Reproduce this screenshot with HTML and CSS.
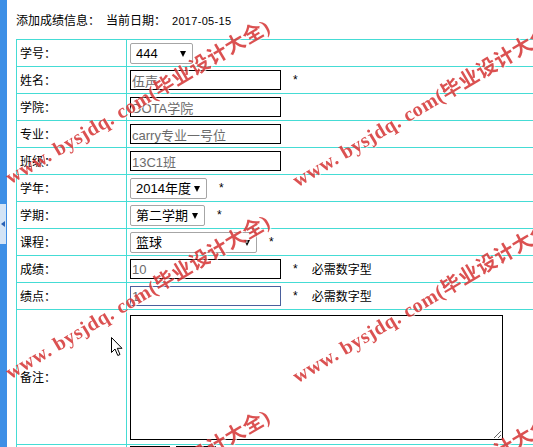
FILE: index.html
```html
<!DOCTYPE html>
<html lang="zh-CN">
<head>
  <meta charset="UTF-8">
  <title>添加成绩信息</title>
  <link rel="stylesheet" href="styles.css">
</head>
<body>

  <div class="side">
    <div class="side-tab"></div>
  </div>

  <div class="main">
    <div class="title">
      <span class="title-item">添加成绩信息：</span><span class="title-item">当前日期：</span><span class="date">2017-05-15</span>
    </div>

    <form>
      <table class="form-table">
        <tr>
          <td class="label">学号：</td>
          <td><span class="sel sel-id"><select><option>444</option></select></span></td>
        </tr>
        <tr>
          <td class="label">姓名：</td>
          <td><input class="txt" type="text" value="伍声"><span class="req">*</span></td>
        </tr>
        <tr>
          <td class="label">学院：</td>
          <td><input class="txt" type="text" value="DOTA学院"></td>
        </tr>
        <tr>
          <td class="label">专业：</td>
          <td><input class="txt" type="text" value="carry专业一号位"></td>
        </tr>
        <tr>
          <td class="label">班级：</td>
          <td><input class="txt" type="text" value="13C1班"></td>
        </tr>
        <tr>
          <td class="label">学年：</td>
          <td><span class="sel sel-year"><select><option>2014年度</option></select></span><span class="req">*</span></td>
        </tr>
        <tr>
          <td class="label">学期：</td>
          <td><span class="sel sel-term"><select><option>第二学期</option></select></span><span class="req">*</span></td>
        </tr>
        <tr>
          <td class="label">课程：</td>
          <td><span class="sel sel-course"><select><option>篮球</option></select></span><span class="req">*</span></td>
        </tr>
        <tr>
          <td class="label">成绩：</td>
          <td><input class="txt" type="text" value="10"><span class="req">*</span><span class="hint">必需数字型</span></td>
        </tr>
        <tr>
          <td class="label">绩点：</td>
          <td><input class="txt txt-focus" type="text" value="1"><span class="req">*</span><span class="hint">必需数字型</span></td>
        </tr>
        <tr class="memo-row">
          <td class="label">备注：</td>
          <td><textarea class="memo"></textarea></td>
        </tr>
        <tr class="btn-row">
          <td class="label"></td>
          <td><button class="btn" type="submit">提交</button><button class="btn" type="reset">重置</button></td>
        </tr>
      </table>
    </form>
  </div>

  <div class="wm">
    <span class="wm-1">www. bysjdq. com(毕业设计大全)</span>
    <span class="wm-2">www. bysjdq. com(毕业设计大全)</span>
    <span class="wm-3">www. bysjdq. com(毕业设计大全)</span>
    <span class="wm-4">www. bysjdq. com(毕业设计大全)</span>
    <span class="wm-5">www. bysjdq. com(毕业设计大全)</span>
    <span class="wm-6">www. bysjdq. com(毕业设计大全)</span>
  </div>

  <svg class="cursor" width="13" height="20" viewBox="0 0 13 20">
    <path d="M0.5 0.5 L0.5 15.5 L4 12 L6.8 18.5 L9 17.5 L6.3 11.3 L11 11.3 Z" fill="#fff" stroke="#000" stroke-width="1"/>
  </svg>

</body>
</html>
```

FILE: styles.css
```css
html, body {
  margin: 0;
  padding: 0;
  height: 100%;
  overflow: hidden;
}
body {
  display: flex;
  font: 12px/16px "Noto Sans CJK SC", "Liberation Sans", sans-serif;
  color: #000;
  background-color: #fff;
}
.side {
  flex: none;
  width: 7px;
  height: 100%;
  background-color: #3d8fe6;
  display: flex;
  align-items: center;
}
.side-tab {
  width: 6px;
  height: 40px;
  background-color: #d3e4f6;
  display: flex;
  align-items: center;
  justify-content: center;
}
.side-tab::before {
  content: "";
  border-top: 3px solid transparent;
  border-bottom: 3px solid transparent;
  border-right: 4px solid #2a62b5;
}
.main {
  flex: none;
  padding: 12px 0 0 9px;
}
.title {
  line-height: 16px;
  margin-bottom: 11px;
}
.title-item {
  margin-right: 6px;
}
.date {
  font: 11px "Liberation Sans", sans-serif;
  letter-spacing: 0.3px;
}
form {
  margin: 0;
}
.form-table {
  border-collapse: collapse;
  width: 580px;
}
.form-table td {
  border: 1px solid #45dcd5;
  height: 26px;
  padding: 0 0 0 3px;
  vertical-align: middle;
}
.form-table td.label {
  width: 106px;
}
.txt {
  box-sizing: border-box;
  width: 151px;
  height: 20px;
  margin: 0;
  padding: 0 1px;
  border: 1px solid #000;
  font: 13px "Liberation Sans", "Noto Sans CJK SC", sans-serif;
  color: #6b6b6b;
  vertical-align: middle;
  outline: none;
}
.txt-focus {
  border-color: #4a5f9c;
}
.sel {
  position: relative;
  display: inline-block;
  vertical-align: middle;
}
.sel select {
  appearance: none;
  -webkit-appearance: none;
  box-sizing: border-box;
  display: block;
  height: 21px;
  margin: 0;
  padding: 0 0 0 5px;
  border: 1px solid #a6a6a6;
  border-radius: 2px;
  background-color: #fff;
  font: 13px "Liberation Sans", "Noto Sans CJK SC", sans-serif;
  color: #000;
}
.sel::after {
  content: "";
  position: absolute;
  right: 7px;
  top: 8px;
  border-left: 3.5px solid transparent;
  border-right: 3.5px solid transparent;
  border-top: 6px solid #000;
  pointer-events: none;
}
.sel-id select { width: 63px; }
.sel-year select { width: 77px; }
.sel-term select { width: 75px; }
.sel-course select { width: 127px; }
.req {
  margin-left: 12px;
  font-family: "Liberation Sans", sans-serif;
  vertical-align: middle;
}
.hint {
  margin-left: 14px;
  vertical-align: middle;
}
.memo-row td {
  height: 134px;
}
.memo {
  display: block;
  box-sizing: border-box;
  width: 373px;
  height: 125px;
  margin: 0;
  border: 1px solid #000;
  resize: both;
}
.btn-row td {
  vertical-align: top;
  padding-top: 1px;
}
.btn {
  box-sizing: border-box;
  width: 40px;
  height: 24px;
  margin: 0 6px 0 0;
  padding: 6px 0 0;
  border: 1px solid #000;
  background-color: #f0f0f0;
  font: 12px/16px "Noto Sans CJK SC", sans-serif;
}

/* watermark layer */
.wm {
  position: fixed;
  top: 0;
  left: 0;
  right: 0;
  bottom: 0;
  overflow: hidden;
  pointer-events: none;
}
.wm span {
  position: absolute;
  font: bold 20px/20px "Liberation Serif", "Noto Sans CJK SC", serif;
  letter-spacing: 0.6px;
  color: #d63a3a;
  opacity: 0.88;
  text-shadow: 1px 1px 0 rgba(255, 255, 255, 0.7);
  white-space: nowrap;
  transform-origin: 0 100%;
  transform: rotate(-30.5deg);
}
.wm-1 { left: 12px; top: 167px; }
.wm-2 { left: 12px; top: 362px; }
.wm-3 { left: 12px; top: 557px; }
.wm-4 { left: 299px; top: 170px; }
.wm-5 { left: 299px; top: 366px; }
.wm-6 { left: 299px; top: 561px; }

.cursor {
  position: fixed;
  left: 111px;
  top: 337px;
}
```
